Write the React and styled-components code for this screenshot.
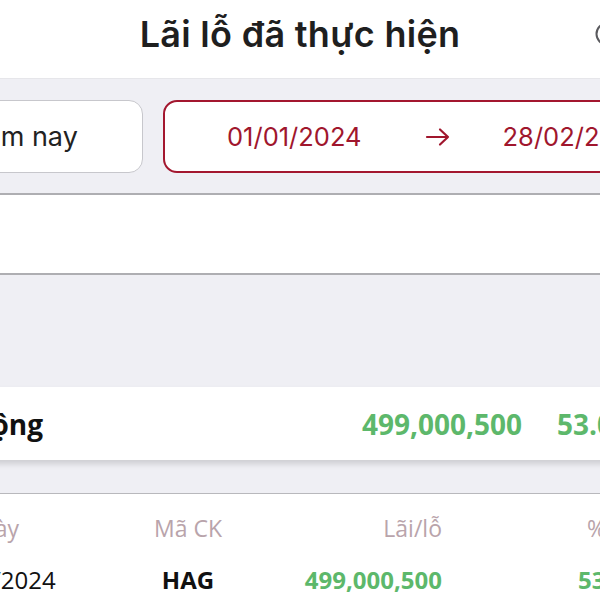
import styled, { createGlobalStyle } from "styled-components";

const GlobalStyle = createGlobalStyle`
  * { box-sizing: border-box; }
  body {
    margin: 0;
    background: #ffffff;
    overflow: hidden;
  }
`;

const Viewport = styled.div`
  width: 600px;
  height: 600px;
  overflow: hidden;
`;

const Screen = styled.div`
  width: 840px;
  margin-left: -120px;
  display: flex;
  flex-direction: column;
`;

const Header = styled.header`
  height: 79px;
  padding-bottom: 10px;
  display: grid;
  grid-template-columns: 1fr auto 1fr;
  align-items: center;
  border-bottom: 1px solid #e6e6ea;
`;

const Title = styled.h1`
  grid-column: 2;
  margin: 0;
  font-family: Inter, "Noto Sans", sans-serif;
  font-size: 36px;
  font-weight: 600;
  color: #1f1f1f;
  letter-spacing: 0.3px;
`;

const HeaderAction = styled.div`
  grid-column: 3;
  justify-self: start;
  margin-left: 135px;
  display: flex;
  color: #5a5a5e;
`;

const FilterBar = styled.div`
  background: #efeff4;
  padding: 21px 0 20px 40px;
  display: flex;
  gap: 20px;
`;

const PeriodBox = styled.div`
  width: 223px;
  height: 73px;
  background: #fff;
  border: 1.5px solid #c7c7cc;
  border-radius: 14px;
  display: flex;
  align-items: center;
  justify-content: center;
  padding-right: 20px;
  font-family: Inter, "Noto Sans", sans-serif;
  font-size: 27px;
  color: #222;
`;

const DateBox = styled.div`
  width: 520px;
  height: 73px;
  background: #fff;
  border: 2px solid #a3172f;
  border-radius: 14px;
  display: flex;
  align-items: center;
  padding-left: 62px;
  font-family: Inter, "Noto Sans", sans-serif;
  font-size: 25.5px;
  color: #a0162d;
`;

const Arrow = styled.span`
  margin: 0 53px 0 63px;
  display: flex;
`;

const Divider = styled.div`
  height: 2px;
  background: #aeaeb2;
`;

const BlankSection = styled.div`
  height: 78px;
  background: #fff;
`;

const SummaryArea = styled.div`
  background: #efeff4;
  padding: 112px 0 33px;
`;

const SummaryCard = styled.div`
  height: 73px;
  background: #fff;
  box-shadow: 0 4px 6px rgba(0, 0, 0, 0.14);
  display: flex;
  align-items: center;
  padding-left: 22px;
  font-family: "Open Sans", "Noto Sans", sans-serif;
  font-weight: 700;
  font-size: 28px;
`;

const SummaryLabel = styled.span`
  flex: 1;
  color: #111;
`;

const Green = styled.span`
  color: #5db86b;
`;

const SummaryValue = styled(Green)`
  width: 300px;
  text-align: right;
`;

const SummaryPercent = styled(Green)`
  margin-left: 35px;
  width: 163px;
`;

const Table = styled.div`
  border-top: 1px solid #b8b8bc;
  font-family: "Open Sans", "Noto Sans", sans-serif;
`;

const TableRow = styled.div`
  display: grid;
  grid-template-columns: 224px 168px 170px 1fr;
  align-items: center;
  height: ${(p) => p.$height}px;
  font-size: ${(p) => p.$size}px;
`;

const Cell = styled.div`
  text-align: ${(p) => p.$align || "center"};
  padding-left: ${(p) => p.$pad || 0}px;
  font-weight: ${(p) => (p.$bold ? 700 : 400)};
  color: ${(p) => p.$color || "#111"};
  white-space: nowrap;
`;

const HEAD = "#b9a4ab";
const GREEN = "#5db86b";

export default function App() {
  return (
    <Viewport>
      <GlobalStyle />
      <Screen>
        <Header>
          <Title>Lãi lỗ đã thực hiện</Title>
          <HeaderAction>
            <svg width="24" height="24" viewBox="0 0 24 24" fill="none" stroke="currentColor" strokeWidth="2">
              <circle cx="12" cy="12" r="10.5" />
              <path d="M12 11v6M12 7.5v.5" strokeLinecap="round" />
            </svg>
          </HeaderAction>
        </Header>

        <FilterBar>
          <PeriodBox>Năm nay</PeriodBox>
          <DateBox>
            <span>01/01/2024</span>
            <Arrow>
              <svg width="25" height="20" viewBox="0 0 25 20" fill="none" stroke="currentColor" strokeWidth="2.2" strokeLinecap="round" strokeLinejoin="round">
                <path d="M2 10h21M15 2.5l8 7.5-8 7.5" />
              </svg>
            </Arrow>
            <span>28/02/2024</span>
          </DateBox>
        </FilterBar>
        <Divider />
        <BlankSection />
        <Divider />

        <SummaryArea>
          <SummaryCard>
            <SummaryLabel>Tổng cộng</SummaryLabel>
            <SummaryValue>499,000,500</SummaryValue>
            <SummaryPercent>53.02%</SummaryPercent>
          </SummaryCard>
        </SummaryArea>

        <Table>
          <TableRow $height={67} $size={23}>
            <Cell $color={HEAD}>Ngày</Cell>
            <Cell $color={HEAD}>Mã CK</Cell>
            <Cell $color={HEAD} $align="right">Lãi/lỗ</Cell>
            <Cell $color={HEAD} $align="left" $pad={145}>%</Cell>
          </TableRow>
          <TableRow $height={36} $size={24}>
            <Cell>28/02/2024</Cell>
            <Cell $bold>HAG</Cell>
            <Cell $bold $color={GREEN} $align="right">499,000,500</Cell>
            <Cell $bold $color={GREEN} $align="left" $pad={136}>53.02%</Cell>
          </TableRow>
        </Table>
      </Screen>
    </Viewport>
  );
}
